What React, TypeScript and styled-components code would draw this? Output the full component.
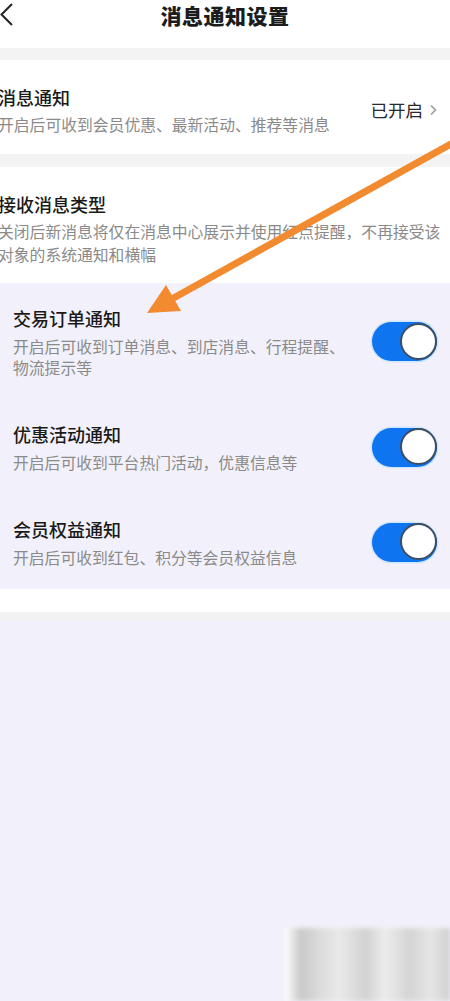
import * as React from "react";
import styled, { createGlobalStyle } from "styled-components";

const GlobalStyle = createGlobalStyle`
  html, body {
    margin: 0;
    padding: 0;
    background: #f2f1fb;
  }
  body {
    font-family: "Noto Sans CJK SC", "Noto Sans", sans-serif;
  }
`;

const Screen = styled.div`
  position: relative;
  width: 450px;
  min-height: 1001px;
  background: #f2f1fb;
  overflow: hidden;
`;

const Header = styled.header`
  display: grid;
  grid-template-columns: 40px 1fr 40px;
  align-items: start;
  height: 48px;
  background: #ffffff;
`;

const BackIcon = styled.svg`
  width: 16px;
  height: 28px;
  margin-top: 1px;
`;

const Title = styled.h1`
  margin: 0;
  text-align: center;
  font-size: 21px;
  line-height: 30px;
  font-weight: 900;
  color: #1c1c1c;
  letter-spacing: 0.5px;
`;

const Gap = styled.div<{ $h: number; $color?: string }>`
  height: ${(p) => p.$h}px;
  background: ${(p) => p.$color ?? "#f3f3f4"};
`;

const Card = styled.section<{ $pad: string }>`
  display: flex;
  align-items: center;
  justify-content: space-between;
  background: #ffffff;
  padding: ${(p) => p.$pad};
`;

const TextBlock = styled.div<{ $gap: number }>`
  display: flex;
  flex-direction: column;
  gap: ${(p) => p.$gap}px;
  margin-left: -2px;
`;

const ItemTitle = styled.div`
  font-size: 18px;
  line-height: 26px;
  color: #1a1a1a;
  font-weight: 500;
`;

const ItemDesc = styled.div<{ $lh?: number }>`
  font-size: 15.8px;
  line-height: ${(p) => p.$lh ?? 21}px;
  color: #8a8a8a;
`;

const Status = styled.div`
  display: flex;
  align-items: center;
  gap: 6px;
  font-size: 17.5px;
  color: #2a2a2a;
`;

const SmallChevron = styled.svg`
  width: 9px;
  height: 12px;
`;

const ToggleList = styled.section`
  background: #f2f1fb;
`;

const ToggleRow = styled.div`
  display: flex;
  align-items: center;
  justify-content: space-between;
  padding: 22px 13px 21px 13px;
`;

const RowText = styled.div`
  display: flex;
  flex-direction: column;
  gap: 5px;
  max-width: 345px;
`;

const Switch = styled.div<{ $on: boolean }>`
  position: relative;
  flex: none;
  width: 65px;
  height: 39px;
  border-radius: 20px;
  background: ${(p) => (p.$on ? "#0e74ef" : "#d6d6dc")};
  box-shadow: 0 0 0 1.5px #cfe6ff;
`;

const Knob = styled.span<{ $on: boolean }>`
  position: absolute;
  top: 0.5px;
  ${(p) => (p.$on ? "right: 0;" : "left: 0;")}
  width: 33px;
  height: 33px;
  border-radius: 50%;
  background: #ffffff;
  border: 2.5px solid #3d4d63;
`;

const Arrow = styled.svg`
  position: absolute;
  left: 0;
  top: 0;
  width: 450px;
  height: 1001px;
  pointer-events: none;
`;

const Watermark = styled.div`
  position: absolute;
  right: 0;
  bottom: 0;
  width: 162px;
  height: 73px;
  background: linear-gradient(
    90deg,
    #f4f4f4 0%,
    #c9c9c9 8%,
    #dcdcdc 20%,
    #e9e9e9 32%,
    #d2d2d2 48%,
    #ececec 60%,
    #d4d4d4 75%,
    #e6e6e6 88%,
    #cfcfcf 100%
  );
  filter: blur(2px);
  border-left: 3px solid #fafafa;
`;

const toggles = [
  {
    title: "交易订单通知",
    desc: "开启后可收到订单消息、到店消息、行程提醒、物流提示等",
  },
  { title: "优惠活动通知", desc: "开启后可收到平台热门活动，优惠信息等" },
  { title: "会员权益通知", desc: "开启后可收到红包、积分等会员权益信息" },
];

export default function App() {
  return (
    <>
      <GlobalStyle />
      <Screen>
        <Header>
          <BackIcon viewBox="0 0 16 28">
            <path
              d="M12 3 L1.5 13.5 L12 24"
              fill="none"
              stroke="#222"
              strokeWidth="2"
            />
          </BackIcon>
          <Title>消息通知设置</Title>
          <span />
        </Header>
        <Gap $h={12} />
        <Card $pad="24px 12px 19px 0">
          <TextBlock $gap={4}>
            <ItemTitle>消息通知</ItemTitle>
            <ItemDesc>开启后可收到会员优惠、最新活动、推荐等消息</ItemDesc>
          </TextBlock>
          <Status>
            已开启
            <SmallChevron viewBox="0 0 9 12">
              <path
                d="M2 1.5 L6.5 6 L2 10.5"
                fill="none"
                stroke="#999"
                strokeWidth="1.5"
              />
            </SmallChevron>
          </Status>
        </Card>
        <Gap $h={13} />
        <Card $pad="24px 0 17px 0">
          <TextBlock $gap={3}>
            <ItemTitle>接收消息类型</ItemTitle>
            <ItemDesc $lh={23}>
              关闭后新消息将仅在消息中心展示并使用红点提醒，不再接受该对象的系统通知和横幅
            </ItemDesc>
          </TextBlock>
        </Card>
        <ToggleList>
          {toggles.map((t) => (
            <ToggleRow key={t.title}>
              <RowText>
                <ItemTitle>{t.title}</ItemTitle>
                <ItemDesc>{t.desc}</ItemDesc>
              </RowText>
              <Switch $on>
                <Knob $on />
              </Switch>
            </ToggleRow>
          ))}
        </ToggleList>
        <Gap $h={23} $color="#ffffff" />
        <Gap $h={9} $color="#f2f2f3" />
        <Arrow viewBox="0 0 450 1001">
          <line
            x1="460"
            y1="139"
            x2="170"
            y2="300"
            stroke="#f28a30"
            strokeWidth="7"
          />
          <polygon points="147,313 181,311 166,285" fill="#f28a30" />
        </Arrow>
        <Watermark />
      </Screen>
    </>
  );
}
